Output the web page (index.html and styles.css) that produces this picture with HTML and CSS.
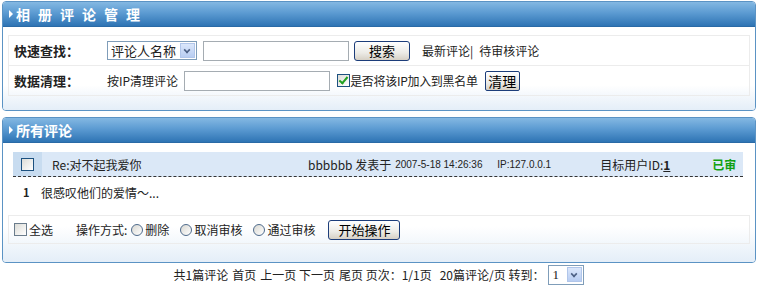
FILE: index.html
```html
<!DOCTYPE html>
<html lang="zh-CN">
<head>
    <meta charset="UTF-8">
    <title>相册评论管理</title>
    <link rel="stylesheet" href="styles.css">
</head>
<body>
    <!-- 相册评论管理 -->
    <div class="panel">
        <div class="panel-head"><span class="arrow"></span><span class="spaced">相册评论管理</span></div>
        <div class="panel-body">
            <div class="tools">
                <div class="tool-row">
                    <span class="tool-label">快速查找：</span>
                    <span class="fake-select"><span class="sel-text">评论人名称</span><span class="sel-btn"></span></span>
                    <span class="fake-input w146"></span>
                    <span class="btn btn-search">搜索</span>
                    <span class="link">最新评论|</span>
                    <span class="link">待审核评论</span>
                </div>
                <div class="tool-row">
                    <span class="tool-label">数据清理：</span>
                    <span class="plain">按IP清理评论</span>
                    <span class="fake-input w146"></span>
                    <span class="check checked"></span>
                    <span class="plain">是否将该IP加入到黑名单</span>
                    <span class="btn btn-clear">清理</span>
                </div>
            </div>
        </div>
    </div>

    <!-- 所有评论 -->
    <div class="panel second">
        <div class="panel-head"><span class="arrow"></span>所有评论</div>
        <div class="panel-body list">
            <div class="comment-head">
                <span class="cell-check"><span class="check"></span></span>
                <span class="c-title">Re:对不起我爱你</span>
                <span class="c-user">bbbbbb 发表于</span>
                <span class="c-small c-date">2007-5-18 14:26:36</span>
                <span class="c-small c-ip">IP:127.0.0.1</span>
                <span class="c-target">目标用户ID:<u>1</u></span>
                <span class="c-status">已审</span>
            </div>
            <div class="comment-body">
                <b class="num">1</b>
                <span>很感叹他们的爱情～...</span>
            </div>
            <div class="actions">
                <span class="check"></span><span class="lbl">全选</span>
                <span class="op">操作方式:</span>
                <span class="radio"></span><span class="lbl">删除</span>
                <span class="radio"></span><span class="lbl">取消审核</span>
                <span class="radio"></span><span class="lbl">通过审核</span>
                <span class="btn btn-go">开始操作</span>
            </div>
        </div>
    </div>

    <div class="pager">
        <span>共1篇评论</span>
        <span>首页</span>
        <span>上一页 下一页</span>
        <span>尾页 页次：1/1页</span>
        <span class="gap">20篇评论/页 转到：</span>
        <span class="fake-select small"><span class="sel-text">1</span><span class="sel-btn"></span></span>
    </div>
</body>
</html>
```

FILE: styles.css
```css
body {
    margin: 0;
    padding: 1px 2px 0 2px;
    font-family: "Noto Sans CJK SC", "Liberation Sans", sans-serif;
    font-size: 12px;
    color: #222;
    background: #fff;
}
.panel {
    border: 1px solid #5b93c4;
    border-radius: 4px;
    overflow: hidden;
    background: #fff;
}
.panel.second {
    margin-top: 6px;
}
.panel-head {
    height: 24px;
    display: flex;
    align-items: center;
    padding-left: 6px;
    background: linear-gradient(#84b8e2, #5c9bd2 45%, #2e74b4);
    color: #fff;
    font-size: 14px;
    font-weight: bold;
    border-bottom: 1px solid #2a6aa6;
}
.spaced {
    letter-spacing: 8px;
}
.arrow {
    width: 0;
    height: 0;
    border-top: 4px solid transparent;
    border-bottom: 4px solid transparent;
    border-left: 4px solid #fff;
    margin-right: 3px;
}
.panel-body {
    padding: 8px 5px 14px 5px;
    background: linear-gradient(#fff 70%, #e4eef8);
}
.tools {
    border: 1px solid #ececec;
}
.tool-row {
    height: 29px;
    display: flex;
    align-items: center;
    padding-left: 5px;
    white-space: nowrap;
}
.tool-row + .tool-row {
    border-top: 1px solid #ececec;
}
.tool-label {
    font-weight: bold;
    font-size: 13px;
    width: 93px;
}
.fake-select {
    display: inline-flex;
    align-items: center;
    height: 19px;
    border: 1px solid #7f9db9;
    background: #fff;
    box-sizing: border-box;
    width: 90px;
    font-size: 13px;
}
.sel-text {
    flex: 1;
    padding-left: 3px;
}
.sel-btn {
    width: 15px;
    height: 15px;
    margin-right: 1px;
    background: linear-gradient(#dbe7fb, #b8cdf2);
    border: 1px solid #b1c6ea;
    box-sizing: border-box;
    position: relative;
}
.sel-btn::after {
    content: "";
    position: absolute;
    left: 3px;
    top: 3px;
    width: 4px;
    height: 4px;
    border-right: 2px solid #4d6185;
    border-bottom: 2px solid #4d6185;
    transform: rotate(45deg) scale(0.8);
}
.fake-input {
    display: inline-block;
    height: 20px;
    border: 1px solid #a5acb2;
    box-sizing: border-box;
    background: #fff;
}
.w146 {
    width: 146px;
}
.tool-row .fake-select + .fake-input {
    margin-left: 6px;
}
.btn {
    display: inline-flex;
    align-items: center;
    justify-content: center;
    height: 20px;
    box-sizing: border-box;
    border: 1px solid #1c3d7a;
    border-radius: 3px;
    background: linear-gradient(#fff, #ecebe6 60%, #d6d0c5);
    font-size: 13px;
    color: #000;
}
.btn-search {
    width: 56px;
    margin-left: 5px;
}
.link {
    margin-left: 12px;
}
.link + .link {
    margin-left: 6px;
}
.plain {
    margin-right: 6px;
}
.check {
    display: inline-block;
    width: 13px;
    height: 13px;
    box-sizing: border-box;
    border: 1px solid #1c5180;
    background: linear-gradient(135deg, #dcdcd7, #fff);
    position: relative;
    flex-shrink: 0;
}
.check.checked::after {
    content: "";
    position: absolute;
    left: 3px;
    top: 0px;
    width: 3px;
    height: 7px;
    border-right: 2px solid #21a121;
    border-bottom: 2px solid #21a121;
    transform: rotate(40deg);
}
.tool-row .fake-input + .check {
    margin-left: 7px;
    margin-right: 0;
}
.tool-row .check + .plain {
    letter-spacing: -0.3px;
    margin-right: 4px;
}
.btn-clear {
    width: 35px;
    height: 20px;
    margin-left: 3px;
    font-size: 14px;
    border-radius: 2px;
}
.list {
    padding: 9px 12px 18px 5px;
}
.comment-head {
    margin-left: 5px;
    height: 24px;
    display: flex;
    align-items: center;
    background: #dbe8f7;
    border-bottom: 1px dashed #333;
    white-space: nowrap;
}
.comment-head span {
    flex-shrink: 0;
}
.cell-check {
    width: 29px;
    height: 24px;
    background: #c8dcf0;
    display: flex;
    align-items: center;
    justify-content: center;
}
.c-title {
    margin-left: 10px;
    width: 256px;
}
.c-user {
    margin-right: 4px;
}
.c-small {
    font-family: "Liberation Sans", sans-serif;
    font-size: 10px;
}
.c-date {
    width: 102px;
}
.c-ip {
    width: 103px;
}
.c-target {
    width: 112px;
}
.c-target u {
    font-weight: bold;
}
.c-status {
    color: #11a011;
    font-weight: bold;
}
.comment-body {
    height: 30px;
    display: flex;
    align-items: center;
    padding-left: 15px;
}
.num {
    width: 18px;
    font-size: 11px;
}
.actions {
    margin-top: 8px;
    margin-right: -7px;
    height: 27px;
    border: 1px solid #ececec;
    display: flex;
    align-items: center;
    padding-left: 5px;
    white-space: nowrap;
}
.actions .lbl {
    margin-left: 2px;
    margin-right: 11px;
}
.actions .check {
    border-color: #6a7c8c;
}
.op {
    margin-left: 12px;
    margin-right: 4px;
}
.radio {
    display: inline-block;
    width: 12px;
    height: 12px;
    border-radius: 50%;
    border: 1px solid #4f6b8c;
    background: linear-gradient(135deg, #d9d8d2, #fff);
    box-sizing: border-box;
}
.btn-go {
    width: 72px;
    margin-left: 2px;
}
.pager {
    height: 23px;
    display: flex;
    align-items: center;
    justify-content: center;
    font-size: 12px;
    white-space: nowrap;
}
.pager span + span {
    margin-left: 4px;
}
.pager .gap {
    margin-left: 8px;
}
.fake-select.small {
    width: 36px;
    height: 20px;
    border-color: #7f9db9;
    font-family: "Liberation Serif", serif;
    font-size: 13px;
}
.pager .fake-select span {
    margin-left: 0;
}
```
